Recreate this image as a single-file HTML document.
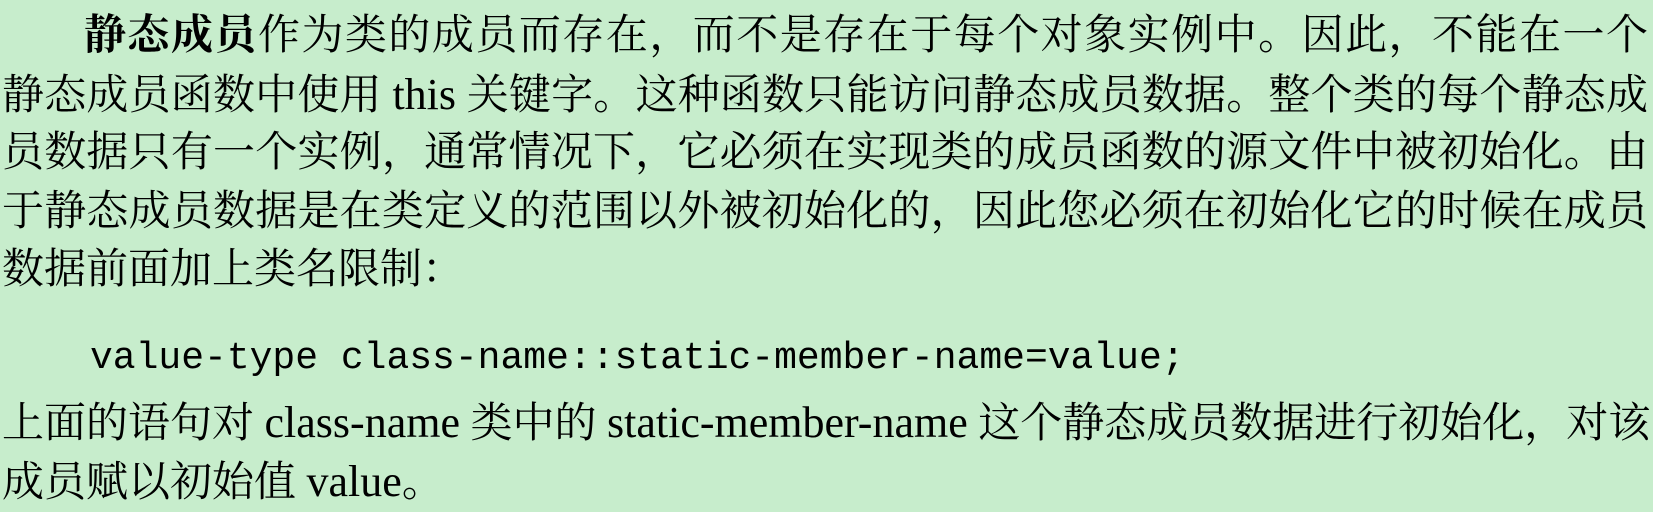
<!DOCTYPE html>
<html><head><meta charset="utf-8"><style>
html,body{margin:0;padding:0;background:#c7edcc;width:1653px;height:512px;overflow:hidden}
.w{position:absolute;left:2px;top:7px;width:1646px;font-family:"Liberation Serif","Noto Serif CJK SC",serif;font-size:42px;color:#000;}
.l{height:58.5px;line-height:58.5px;text-align:justify;text-align-last:justify;white-space:nowrap}
.l.last{text-align-last:left}
.c{font-family:"Liberation Mono",monospace;font-size:38px;height:70px;line-height:70px;padding-top:24.5px;padding-left:88px;white-space:pre}
b{font-weight:bold}
.e{font-size:44px}
</style></head><body><div class="w">
<div class="l" style="padding-left:82px"><b>静态成员</b>作为类的成员而存在，而不是存在于每个对象实例中。因此，不能在一个</div>
<div class="l">静态成员函数中使用 <span class="e">this</span> 关键字。这种函数只能访问静态成员数据。整个类的每个静态成</div>
<div class="l">员数据只有一个实例，通常情况下，它必须在实现类的成员函数的源文件中被初始化。由</div>
<div class="l">于静态成员数据是在类定义的范围以外被初始化的，因此您必须在初始化它的时候在成员</div>
<div class="l last">数据前面加上类名限制：</div>
<div class="c">value-type class-name::static-member-name=value;</div>
<div class="l">上面的语句对 <span class="e">class-name</span> 类中的 <span class="e">static-member-name</span> 这个静态成员数据进行初始化，对该</div>
<div class="l last">成员赋以初始值 <span class="e">value</span>。</div>
</div></body></html>
